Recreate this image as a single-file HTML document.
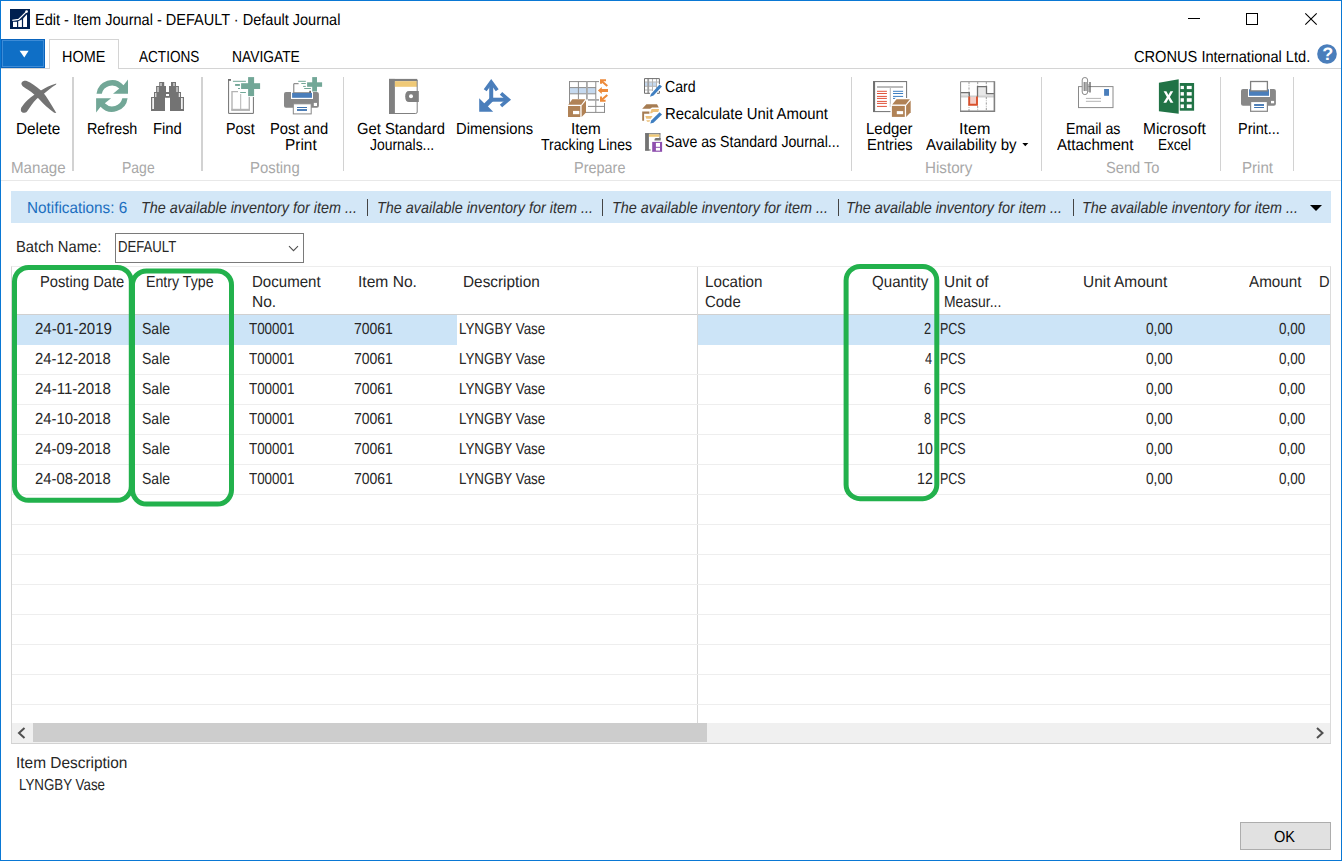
<!DOCTYPE html>
<html lang="en"><head><meta charset="utf-8"><title>Edit - Item Journal - DEFAULT · Default Journal</title>
<style>
html,body{margin:0;padding:0;background:#fff;}
body{width:1342px;height:861px;overflow:hidden;font-family:"Liberation Sans",sans-serif;}
#win{position:relative;width:1342px;height:861px;background:#fff;overflow:hidden;}
.t{position:absolute;text-rendering:geometricPrecision;transform-origin:0 0;white-space:pre;line-height:1;font-family:"Liberation Sans",sans-serif;}
.a{position:absolute;}
svg{position:absolute;overflow:visible;}

</style></head>
<body>
<div id="win">
<!-- window frame -->
<div class="a" style="left:0;top:0;width:1342px;height:1px;background:#0a78d4"></div>
<div class="a" style="left:0;top:0;width:1px;height:861px;background:#0a78d4"></div>
<div class="a" style="left:1341px;top:0;width:1px;height:861px;background:#0a78d4"></div>
<div class="a" style="left:0;top:860px;width:1342px;height:1px;background:#0a78d4"></div>
<!-- tabs -->
<div class="a" style="left:1px;top:68px;width:1340px;height:1px;background:#d4d4d4"></div>
<div class="a" style="left:1px;top:39px;width:44px;height:29px;background:#0f6fc6;border:1px solid #0a64bd;box-sizing:border-box;box-shadow:inset 0 0 0 1px #3d8bd6"></div>
<div class="a" style="left:49px;top:39px;width:70px;height:30px;border:1px solid #d4d4d4;border-bottom:none;background:#fff;box-sizing:border-box"></div>
<!-- ribbon bottom -->
<div class="a" style="left:1px;top:180px;width:1340px;height:1px;background:#e8e8e8"></div>
<!-- notification bar -->
<div class="a" style="left:11px;top:191px;width:1320px;height:32px;background:#d3e7f7"></div>
<!-- batch input -->
<div class="a" style="left:115px;top:233px;width:189px;height:30px;border:1px solid #7a7a7a;box-sizing:border-box;background:#fff"></div>
<!-- grid -->
<div class="a" style="left:11px;top:266px;width:1320px;height:478px;border:1px solid #dadada;border-top-color:#ededed;border-left-color:#d6d6d6;box-sizing:border-box;background:#fff"></div>
<div class="a" style="left:12px;top:314px;width:1318px;height:1px;background:#d0d0d0"></div>
<div class="a" style="left:12px;top:315px;width:445px;height:30px;background:#cce4f7"></div>
<div class="a" style="left:698px;top:315px;width:632px;height:30px;background:#cce4f7"></div>
<div class="a" style="left:697px;top:267px;width:1px;height:456px;background:#d8d8d8"></div>
<!-- OK -->
<div class="a" style="left:1240px;top:822px;width:91px;height:28px;border:1px solid #adadad;box-sizing:border-box;background:#e1e1e1"></div>
<div class="a" style="left:12px;top:374px;width:1318px;height:1px;background:#eeeeee"></div>
<div class="a" style="left:12px;top:404px;width:1318px;height:1px;background:#eeeeee"></div>
<div class="a" style="left:12px;top:434px;width:1318px;height:1px;background:#eeeeee"></div>
<div class="a" style="left:12px;top:464px;width:1318px;height:1px;background:#eeeeee"></div>
<div class="a" style="left:12px;top:494px;width:1318px;height:1px;background:#eeeeee"></div>
<div class="a" style="left:12px;top:524px;width:1318px;height:1px;background:#eeeeee"></div>
<div class="a" style="left:12px;top:554px;width:1318px;height:1px;background:#eeeeee"></div>
<div class="a" style="left:12px;top:584px;width:1318px;height:1px;background:#eeeeee"></div>
<div class="a" style="left:12px;top:614px;width:1318px;height:1px;background:#eeeeee"></div>
<div class="a" style="left:12px;top:644px;width:1318px;height:1px;background:#eeeeee"></div>
<div class="a" style="left:12px;top:674px;width:1318px;height:1px;background:#eeeeee"></div>
<div class="a" style="left:12px;top:704px;width:1318px;height:1px;background:#eeeeee"></div>
<!-- scrollbar -->
<div class="a" style="left:12px;top:723px;width:1318px;height:20px;background:#f0f0f0"></div>
<div class="a" style="left:33px;top:723px;width:674px;height:19px;background:#cdcdcd"></div>
<div class="a" style="left:11px;top:743px;width:1320px;height:1px;background:#d2d2d2"></div>
<svg style="left:12px;top:723px" width="21" height="20" viewBox="0 0 21 20"><path d="M12.5 5 L7 10 L12.5 15" fill="none" stroke="#505050" stroke-width="2"/></svg>
<svg style="left:1309px;top:723px" width="21" height="20" viewBox="0 0 21 20"><path d="M8 5 L13.5 10 L8 15" fill="none" stroke="#505050" stroke-width="2"/></svg>
<!-- group separators -->
<div class="a" style="left:72px;top:77px;width:2px;height:94px;background:#d2d2d2"></div>
<div class="a" style="left:201px;top:77px;width:2px;height:94px;background:#d2d2d2"></div>
<div class="a" style="left:343px;top:77px;width:1px;height:94px;background:#d2d2d2"></div>
<div class="a" style="left:851px;top:77px;width:1px;height:94px;background:#d2d2d2"></div>
<div class="a" style="left:1041px;top:77px;width:1px;height:94px;background:#d2d2d2"></div>
<div class="a" style="left:1220px;top:77px;width:1px;height:94px;background:#d2d2d2"></div>
<div class="a" style="left:1293px;top:77px;width:1px;height:94px;background:#d2d2d2"></div>
<div class="a" style="left:367px;top:199px;width:1px;height:17px;background:#444"></div>
<div class="a" style="left:602px;top:199px;width:1px;height:17px;background:#444"></div>
<div class="a" style="left:838px;top:199px;width:1px;height:17px;background:#444"></div>
<div class="a" style="left:1073px;top:199px;width:1px;height:17px;background:#444"></div>
<svg style="left:1309px;top:204px" width="14" height="8" viewBox="0 0 14 8"><path d="M1 1 L13 1 L7 7 Z" fill="#000"/></svg>
<!-- blue button arrow -->
<svg style="left:17px;top:49px" width="14" height="10" viewBox="0 0 14 10"><path d="M2.6 1.8 L11.6 1.8 L7.3 8.5 Z" fill="#fff"/></svg>
<!-- combo chevron -->
<svg style="left:288px;top:245px" width="12" height="8" viewBox="0 0 12 8"><path d="M1 1.2 L5.5 5.7 L10 1.2" fill="none" stroke="#505050" stroke-width="1.1"/></svg>
<!-- availability dropdown arrow -->
<svg style="left:1022px;top:143px" width="7" height="4" viewBox="0 0 7 4"><path d="M0.3 0 L6.3 0 L3.3 3.3 Z" fill="#000"/></svg>
<!-- window controls -->
<svg style="left:1188px;top:18px" width="12" height="1" viewBox="0 0 12 1"><rect width="12" height="1" fill="#000"/></svg>
<svg style="left:1246px;top:13px" width="12" height="12" viewBox="0 0 12 12"><rect x="0.5" y="0.5" width="11" height="11" fill="none" stroke="#000" stroke-width="1"/></svg>
<svg style="left:1305px;top:13px" width="12" height="12" viewBox="0 0 12 12"><path d="M0.3 0.3 L11.7 11.7 M11.7 0.3 L0.3 11.7" stroke="#000" stroke-width="1.1" fill="none"/></svg>
<!-- green annotation boxes -->
<svg style="left:0;top:0;z-index:5" width="1342" height="861" viewBox="0 0 1342 861">
<rect x="14.5" y="267.5" width="116.8" height="232.8" rx="14" ry="14" fill="none" stroke="#22b14c" stroke-width="5"/>
<rect x="132.5" y="271" width="99" height="233" rx="14" ry="14" fill="none" stroke="#22b14c" stroke-width="5"/>
<rect x="846.1" y="266.5" width="90.7" height="232.2" rx="14" ry="14" fill="none" stroke="#22b14c" stroke-width="5"/>
</svg>

<div class="a dcover" style="left:1330px;top:267px;width:10px;height:47px;background:#fff;z-index:4;border-left:1px solid #dcdcdc;box-sizing:border-box"></div>
<svg style="left:0;top:0" width="1342" height="130" viewBox="0 0 1342 130">
<!-- app icon -->
<g>
<rect x="10" y="9" width="20" height="20" fill="#002050"/>
<path d="M13 21.8 L17 21.8 L17 27 L13 27 Z" fill="#fff"/>
<path d="M18.2 21.2 L21.9 19.6 L21.9 27 L18.2 27 Z" fill="#fff"/>
<path d="M23.1 18.4 L27 14.3 L27 27 L23.1 27 Z" fill="#fff"/>
<path d="M12.3 20.3 L18.6 19.5 L26.5 11.6" fill="none" stroke="#fff" stroke-width="1.3"/>
<circle cx="26.6" cy="11.6" r="1.3" fill="#fff"/>
</g>
<!-- help -->
<circle cx="1327" cy="54" r="9.8" fill="#4a7ebb"/>
<!-- Delete X -->
<g fill="#737373">
<path d="M21.6 84.6 C20.8 82 23.5 80.2 26.8 81 C31 82.5 36 86.5 40.4 89.9 C43.5 92.5 45.8 95.8 47.6 98.8 C50.5 103.5 53.5 108 56.3 112.9 L54.2 112.7 C51.5 110.5 48.5 108.5 45.8 106 C42 102.3 38.5 98 34.2 94.4 C30.5 91.3 26 88.8 23 86.6 C22.3 86 21.9 85.3 21.6 84.6 Z"/>
<path d="M56.3 83.4 L56.1 84.6 C53.5 86 51 87.8 48.5 89.9 C46.5 91.4 44.8 92.9 43.1 94.4 C41 95.8 38.8 97.2 36.8 98.8 C34.8 100.8 33 103 31.5 105.1 C30 107.2 28.5 109.4 27 111.4 C25.8 112.8 23.8 113.2 22.4 112.6 C20.6 111.8 20.6 109.6 21.2 107.8 C23 104.8 25.5 102 27.9 99.7 C31.8 96.3 36 93.5 40.4 90.8 C42.8 89.3 45.2 88 47.6 86.8 C50.4 85.5 53.3 84.3 56.3 83.4 Z"/>
</g>
<!-- Refresh -->
<g fill="#72a797">
<path d="M96.5 93.7 A15.6 15.6 0 0 1 123.5 85.2 L128 79.4 L128 93.7 L113 93.7 L119.3 88.6 A10.4 10.4 0 0 0 101.8 93.7 Z"/>
<path d="M127.6 98.2 A15.6 15.6 0 0 1 100.6 106.7 L96.1 112.5 L96.1 98.2 L111.1 98.2 L104.8 103.3 A10.4 10.4 0 0 0 122.3 98.2 Z"/>
</g>
<!-- Find (binoculars) -->
<g fill="#737373">
<rect x="159.2" y="82" width="5" height="4.5"/>
<rect x="156.1" y="86" width="9.9" height="6.5"/>
<rect x="154" y="92" width="12" height="5.5"/>
<rect x="151" y="97" width="14" height="14"/>
<rect x="171" y="82" width="5" height="4.5"/>
<rect x="169" y="86" width="9.9" height="6.5"/>
<rect x="169" y="92" width="12" height="5.5"/>
<rect x="170" y="97" width="14" height="14"/>
<rect x="165.5" y="92" width="4" height="2"/>
<rect x="165.5" y="96" width="4" height="1.8"/>
</g>
<g fill="#fff">
<rect x="152.3" y="98" width="1.6" height="11"/>
<rect x="155.3" y="93" width="1" height="4"/>
<rect x="157.5" y="87" width="1" height="5"/>
<rect x="160.5" y="83" width="1" height="3"/>
<rect x="181.1" y="98" width="1.6" height="11"/>
<rect x="178.8" y="93" width="1" height="4"/>
<rect x="176.5" y="87" width="1" height="5"/>
<rect x="173.5" y="83" width="1" height="3"/>
</g>
<!-- Post -->
<g>
<path d="M231 79.7 L228.6 79.7 L228.6 113.4 L253.4 113.4 L253.4 97" fill="none" stroke="#707070" stroke-width="1"/>
<rect x="228" y="79" width="3" height="1.8" fill="#707070"/>
<path d="M238 91.6 L232 91.6 L232 110 L249.3 110 L249.3 97" fill="none" stroke="#b4b4b4" stroke-width="1.4"/>
<rect x="231.4" y="108.8" width="18.5" height="2" fill="#b4b4b4"/>
<rect x="240.2" y="94" width="1" height="15" fill="#b4b4b4"/>
<g fill="#72a797">
<rect x="248.1" y="77.1" width="6" height="19"/>
<rect x="241.1" y="83.2" width="19" height="5.8"/>
<rect x="232.9" y="80.8" width="13" height="1"/>
<rect x="235.1" y="84" width="4.8" height="1.9"/>
<rect x="238" y="88" width="2" height="1"/>
<rect x="240.2" y="92" width="5.7" height="1"/>
</g>
</g>
<!-- Post and Print -->
<g>
<rect x="284" y="92.1" width="34.9" height="15.7" rx="2" fill="#888"/>
<rect x="291" y="91" width="22" height="8" fill="#fff"/>
<rect x="292.1" y="92.8" width="19.9" height="5" fill="#4a7ebb"/>
<rect x="293.3" y="83.2" width="17" height="9.6" fill="#fff"/>
<path d="M298.6 83.7 L293.8 83.7 L293.8 92.8" fill="none" stroke="#777" stroke-width="1"/>
<path d="M293.3 92.6 L311 92.6" stroke="#777" stroke-width="0.8"/>
<rect x="309.3" y="90.8" width="1.7" height="2.2" fill="#666"/>
<rect x="293.3" y="103.8" width="17.9" height="10.1" fill="#fff" stroke="#888" stroke-width="1"/>
<rect x="297" y="107" width="10" height="1" fill="#3c72b0"/>
<rect x="297" y="109.1" width="10" height="1.8" fill="#3c72b0"/>
<rect x="313.8" y="102.9" width="3.2" height="3.1" fill="#fff"/>
<g fill="#72a797">
<rect x="312.2" y="77.1" width="4.8" height="14.4"/>
<rect x="307.1" y="82.3" width="15" height="4.5"/>
<rect x="298.2" y="80.8" width="7.6" height="1"/>
<rect x="301.3" y="83" width="4.5" height="1"/>
<rect x="303.1" y="85.9" width="2.7" height="1"/>
<rect x="304.2" y="88" width="6.7" height="1"/>
</g>
</g>
<!-- Get Standard Journals -->
<g>
<rect x="389" y="78.9" width="28.5" height="35" fill="#fff"/>
<rect x="389" y="78.9" width="5.9" height="35" fill="#808080"/>
<rect x="389" y="78.9" width="28.3" height="2.3" fill="#808080"/>
<rect x="394.9" y="81.2" width="22.1" height="5.6" fill="#efc977"/>
<path d="M417.2 80 L417.2 112 Q417.2 113.5 415.7 113.5 L389 113.5" fill="none" stroke="#808080" stroke-width="1"/>
<path d="M418.8 91 L409 91 Q405.2 91 405.2 96.5 Q405.2 102 409 102 L418.8 102 Z" fill="#808080"/>
<circle cx="411" cy="96.3" r="2" fill="#fff"/>
</g>
<!-- Dimensions -->
<g fill="none" stroke="#4a7ebb" stroke-width="4">
<path d="M491.2 100 L491.2 83"/>
<path d="M490 99.7 L507 99.7"/>
<path d="M491.8 99.2 L483 108" stroke-width="4.6"/>
</g>
<g fill="none" stroke="#4a7ebb" stroke-width="3.6">
<path d="M485.2 90.2 L491.2 82 L497.2 90.2"/>
<path d="M501 93.4 L508.3 99.7 L501 106"/>
</g>
<path d="M479.2 111.7 L479.2 98.3 L484 103 L488.5 107 L493.2 111.7 Z" fill="#4a7ebb"/>
<!-- Item Tracking Lines -->
<g>
<rect x="569.5" y="88" width="26.5" height="5.5" fill="#c5d9ef"/>
<g stroke="#8c8c8c" stroke-width="1" fill="none">
<path d="M569 81.6 L599 81.6"/>
<path d="M569.5 81.2 L569.5 104"/>
<path d="M569 87.6 L596 87.6"/>
<path d="M569 93.8 L596 93.8"/>
<path d="M578.4 81.5 L578.4 99"/>
<path d="M595.8 81.5 L595.8 112.5"/>
<path d="M588 106.4 L604.5 106.4"/>
<path d="M586 112.4 L605 112.4"/>
<path d="M604.5 103 L604.5 112.8"/>
</g>
<rect x="586" y="81.5" width="1.8" height="18" fill="#a8a8a8"/>
<rect x="588" y="99" width="11" height="1.8" fill="#a8a8a8"/>
<g fill="#ed8b3b">
<path d="M597.9 90.4 L601.8 87 L601.8 89 L608 89 L608 91.9 L601.8 91.9 L601.8 93.9 Z"/>
<path d="M600 79.2 L606 79.2 L606 81.2 L603.3 81.2 L608 85.2 L606.6 86.8 L602 82.8 L602 83.8 L600 83.8 Z"/>
<path d="M600 101.7 L605.6 101.7 L605.6 99.7 L603.3 99.7 L608 95.8 L606.6 94.2 L602 98.2 L602 96.6 L600 96.6 Z"/>
</g>
<g fill="#b08256">
<rect x="568" y="106" width="12.3" height="11"/>
<path d="M568.3 104.7 L572.3 99.3 L585.3 99.3 L581.2 104.7 Z"/>
<path d="M581.6 105.8 L586 100.4 L586 112.6 L581.6 117 Z"/>
</g>
<rect x="573" y="110.9" width="6.3" height="3.3" fill="#fff"/>
</g>
<!-- Card small icon -->
<g>
<rect x="644.5" y="82.3" width="11.5" height="3.8" fill="#c5d9ef"/>
<g stroke="#b4b4b4" stroke-width="1">
<path d="M652.5 78.5 L652.5 91"/>
<path d="M656.5 78.5 L656.5 88"/>
<path d="M644.5 82 L659.5 82"/>
<path d="M644.5 86.3 L656 86.3"/>
<path d="M644.5 90 L652 90"/>
</g>
<rect x="647.3" y="78.5" width="1.8" height="15" fill="#a0a0a0"/>
<path d="M659.4 84 L659.4 78.6 L644.5 78.6 L644.5 93.3 L650 93.3" fill="none" stroke="#6e6e6e" stroke-width="1"/>
<path d="M657 93.3 L659.4 93.3 L659.4 91" fill="none" stroke="#6e6e6e" stroke-width="1"/>
<path d="M650 96.8 L651 94 L659.5 84.5 L662 86.5 L653.5 95.5 Z" fill="#3f7fc1"/>
</g>
<!-- Recalculate small icon -->
<g>
<path d="M642.2 108.7 L646.4 104.2 L657 104.2 L658.8 107.5 L652 107.5 L650.2 108.7 Z" fill="#a67c52"/>
<path d="M642.2 111.5 L649.4 111.5 L649.4 113.8 L644.1 113.8 L644.1 120.8 L642.2 120.8 Z" fill="#a67c52"/>
<path d="M651.6 109 L659.1 109 L658.3 112 L653.4 112 L651.6 113.2 L650 113.2 Z" fill="#ecc07a"/>
<path d="M645.3 116 L652.5 116 L650.8 118.7 L646.3 118.7 Z" fill="#ecc07a"/>
<path d="M646.2 120.2 L650.2 120.2 L649.4 121.8 L647.2 121.8 Z" fill="#ecc07a"/>
<path d="M650.3 123.6 L651.2 120.6 L659.6 112.2 L662 114.4 L653.5 122.7 Z" fill="#3f7fc1"/>
</g>
<!-- Save small icon -->
<g>
<rect x="645.1" y="133.2" width="3.8" height="17.4" fill="#737373"/>
<rect x="645.1" y="133.2" width="15.2" height="1.2" fill="#737373"/>
<rect x="659.4" y="133.2" width="1" height="6" fill="#737373"/>
<rect x="645.1" y="149.4" width="5.5" height="1.2" fill="#737373"/>
<rect x="649" y="134.4" width="10.4" height="2.4" fill="#efc977"/>
<path d="M654.5 140.6 L654.5 139.6 Q654.5 138.1 656 138.1 L660.7 138.1 L660.7 140.6 Z" fill="#737373"/>
<rect x="652.2" y="141.9" width="9.9" height="9.9" fill="#8e4fae"/>
<rect x="655.9" y="142.9" width="4.1" height="3.9" fill="#fff"/>
<rect x="655.9" y="147.8" width="4.1" height="2.8" fill="#fff"/>
</g>
<!-- Ledger Entries -->
<g>
<rect x="873.6" y="81.6" width="33" height="30" fill="#fff" stroke="#707070" stroke-width="1"/>
<rect x="873.1" y="81.2" width="2" height="30.8" fill="#707070"/>
<rect x="877" y="86.1" width="26.1" height="1.8" fill="#b4b4b4"/>
<rect x="889.8" y="88" width="1" height="19" fill="#b4b4b4"/>
<g fill="#e0533a">
<rect x="877" y="90.8" width="9.9" height="1"/><rect x="877" y="93" width="9.9" height="1"/>
<rect x="877" y="95.9" width="9.9" height="1"/><rect x="877" y="97.9" width="9.9" height="1"/>
<rect x="877" y="100.9" width="9.9" height="1"/><rect x="877" y="102.9" width="9.9" height="1"/>
<rect x="877" y="105.9" width="9.9" height="1"/>
</g>
<g fill="#3f7fc1">
<rect x="893" y="90.8" width="10.1" height="1"/><rect x="893" y="93" width="10.1" height="1"/>
<rect x="893" y="95.9" width="10.1" height="1"/><rect x="893" y="97.9" width="3" height="1"/>
</g>
<path d="M890.5 118 L890.5 104 L895.5 98 L911.8 98 L911.8 113 L906.5 118 Z" fill="#fff"/>
<g fill="#b08256">
<rect x="891.9" y="105.9" width="12.9" height="11"/>
<path d="M892.2 104.6 L896.5 99.3 L909.9 99.3 L905.7 104.6 Z"/>
<path d="M906.1 105.6 L910.7 100.5 L910.7 112.2 L906.1 117 Z"/>
</g>
<rect x="896.8" y="111.1" width="6.3" height="3.1" fill="#fff"/>
</g>
<!-- Item Availability -->
<g>
<rect x="960.5" y="81.6" width="34" height="30" fill="#fff"/>
<rect x="961" y="92.7" width="8" height="3.8" fill="#e8e8e8"/>
<rect x="978" y="86.6" width="8.5" height="9.9" fill="#e8e8e8"/>
<rect x="986.5" y="93.7" width="8" height="2.8" fill="#e8e8e8"/>
<rect x="961" y="95.5" width="33.5" height="2" fill="#d0d0d0"/>
<rect x="969.3" y="97" width="7.6" height="7.6" fill="#f4cfc8"/>
<g stroke="#9a9a9a" stroke-width="1" stroke-dasharray="2.2 1.2 0.8 1.2">
<path d="M969 82 L969 111.5"/><path d="M977.7 82 L977.7 86"/><path d="M977.7 106 L977.7 111.5"/><path d="M986.3 97 L986.3 111.5"/><path d="M986.3 82 L986.3 86"/>
</g>
<path d="M960.5 92.7 L969.3 92.7 L969.3 96.5" fill="none" stroke="#707070" stroke-width="1.3"/>
<path d="M977.5 97 L977.5 86.6 L986.5 86.6 L986.5 93.7 L994.5 93.7" fill="none" stroke="#707070" stroke-width="1.3"/>
<path d="M969.2 96.5 L969.2 104.7 L977 104.7 L977 96.5" fill="none" stroke="#d9512c" stroke-width="1.9"/>
<path d="M960.6 111.8 L960.6 81.7 L994.4 81.7" fill="none" stroke="#8a8a8a" stroke-width="1"/>
<path d="M960.1 111.3 L994.4 111.3 L994.4 81.2" fill="none" stroke="#808080" stroke-width="1.6"/>
</g>
<!-- Email as Attachment -->
<g>
<rect x="1078.5" y="86.6" width="34.5" height="21" fill="#fff" stroke="#8a8a8a" stroke-width="1"/>
<rect x="1104.1" y="89" width="4.9" height="6.8" fill="#4a7ebb"/>
<rect x="1085.9" y="97.9" width="15.1" height="1" fill="#b4b4b4"/>
<rect x="1085.9" y="100.8" width="15.1" height="1" fill="#b4b4b4"/>
<path d="M1082.2 92 L1082.2 80 Q1082.2 77.5 1084.9 77.5 Q1087.6 77.5 1087.6 80 L1087.6 92 Q1087.6 94.6 1084.9 94.6 Q1082.2 94.6 1082.2 92 Z" fill="#fff" stroke="#8a8a8a" stroke-width="1"/>
<path d="M1084.2 82 L1084.2 91 M1086 82 L1086 91" stroke="#5c5c5c" stroke-width="1" fill="none"/>
<path d="M1090 82 L1090 92.5" stroke="#5c5c5c" stroke-width="1.3" fill="none"/><path d="M1088.7 84 L1088.7 92" stroke="#9a9a9a" stroke-width="0.8" fill="none"/>
</g>
<!-- Excel -->
<g>
<rect x="1179.8" y="83" width="14.3" height="27.7" fill="#217346"/>
<g fill="#fff">
<rect x="1180.6" y="85.9" width="3.3" height="3.2"/><rect x="1186.8" y="85.9" width="4.9" height="3.2"/>
<rect x="1180.6" y="92.1" width="3.3" height="3.5"/><rect x="1186.8" y="92.1" width="4.9" height="3.5"/>
<rect x="1180.6" y="98.2" width="3.3" height="3.6"/><rect x="1186.8" y="98.2" width="4.9" height="3.6"/>
<rect x="1180.6" y="104.4" width="3.3" height="3.7"/><rect x="1186.8" y="104.4" width="4.9" height="3.7"/>
</g>
<path d="M1158.9 82.7 L1178.7 79.2 L1178.7 113.8 L1158.9 111.2 Z" fill="#217346"/>
<path d="M1163.6 91.2 L1166.4 91.2 L1168.4 95 L1170.4 91.2 L1173.2 91.2 L1169.9 96.9 L1173.4 102.8 L1170.5 102.8 L1168.4 98.9 L1166.3 102.8 L1163.4 102.8 L1166.9 96.9 Z" fill="#fff"/>
</g>
<!-- Print -->
<g>
<rect x="1241" y="89.1" width="34.9" height="16.7" rx="2" fill="#888"/>
<rect x="1248" y="89" width="22" height="8" fill="#fff"/>
<rect x="1249" y="89.3" width="20" height="6.5" fill="#4a7ebb"/>
<rect x="1250.6" y="81.5" width="16.8" height="9.4" fill="#fff" stroke="#808080" stroke-width="1.3"/>
<rect x="1250.6" y="101.5" width="16.8" height="9.8" fill="#fff" stroke="#888" stroke-width="1.2"/>
<rect x="1254.1" y="104.1" width="9.9" height="1.8" fill="#3c72b0"/>
<rect x="1254.1" y="107" width="9.9" height="1" fill="#3c72b0"/>
<rect x="1271" y="100.9" width="3.1" height="2.4" fill="#fff"/>
</g>
</svg>
<span class="t" style="left:1322.2px;top:44.5px;font-size:18px;font-weight:bold;color:#fff;">?</span>


<span class="t" style="left:34.99px;top:13px;font-size:16px;transform:scaleX(0.9078);color:#000;">Edit - Item Journal - DEFAULT · Default Journal</span>
<span class="t" style="left:1133.59px;top:50px;font-size:16px;transform:scaleX(0.9132);color:#000;">CRONUS International Ltd.</span>
<span class="t" style="left:62.37px;top:50px;font-size:16px;transform:scaleX(0.9014);color:#000;">HOME</span>
<span class="t" style="left:138.60px;top:50px;font-size:16px;transform:scaleX(0.8492);color:#000;">ACTIONS</span>
<span class="t" style="left:232.37px;top:50px;font-size:16px;transform:scaleX(0.8638);color:#000;">NAVIGATE</span>
<span class="t" style="left:15.77px;top:122px;font-size:16px;transform:scaleX(0.9571);color:#000;">Delete</span>
<span class="t" style="left:86.74px;top:122px;font-size:16px;transform:scaleX(0.8978);color:#000;">Refresh</span>
<span class="t" style="left:152.94px;top:122px;font-size:16px;transform:scaleX(0.9278);color:#000;">Find</span>
<span class="t" style="left:225.93px;top:122px;font-size:16px;transform:scaleX(0.8957);color:#000;">Post</span>
<span class="t" style="left:270.35px;top:122px;font-size:16px;transform:scaleX(0.9195);color:#000;">Post and</span>
<span class="t" style="left:285.16px;top:138px;font-size:16px;transform:scaleX(0.9624);color:#000;">Print</span>
<span class="t" style="left:356.77px;top:122px;font-size:16px;transform:scaleX(0.9230);color:#000;">Get Standard</span>
<span class="t" style="left:369.60px;top:138px;font-size:16px;transform:scaleX(0.8701);color:#000;">Journals...</span>
<span class="t" style="left:455.97px;top:122px;font-size:16px;transform:scaleX(0.9215);color:#000;">Dimensions</span>
<span class="t" style="left:571.12px;top:122px;font-size:16px;transform:scaleX(0.9550);color:#000;">Item</span>
<span class="t" style="left:540.60px;top:138px;font-size:16px;transform:scaleX(0.8796);color:#000;">Tracking Lines</span>
<span class="t" style="left:664.56px;top:80px;font-size:16px;transform:scaleX(0.8842);color:#000;">Card</span>
<span class="t" style="left:664.60px;top:107px;font-size:16px;transform:scaleX(0.9293);color:#000;">Recalculate Unit Amount</span>
<span class="t" style="left:664.59px;top:135px;font-size:16px;transform:scaleX(0.8844);color:#000;">Save as Standard Journal...</span>
<span class="t" style="left:865.97px;top:122px;font-size:16px;transform:scaleX(0.9355);color:#000;">Ledger</span>
<span class="t" style="left:867.15px;top:138px;font-size:16px;transform:scaleX(0.9173);color:#000;">Entries</span>
<span class="t" style="left:958.73px;top:122px;font-size:16px;transform:scaleX(1.0054);color:#000;">Item</span>
<span class="t" style="left:926.40px;top:138px;font-size:16px;transform:scaleX(0.9375);color:#000;">Availability by</span>
<span class="t" style="left:1065.97px;top:122px;font-size:16px;transform:scaleX(0.8870);color:#000;">Email as</span>
<span class="t" style="left:1056.80px;top:138px;font-size:16px;transform:scaleX(0.9439);color:#000;">Attachment</span>
<span class="t" style="left:1143.19px;top:122px;font-size:16px;transform:scaleX(0.9678);color:#000;">Microsoft</span>
<span class="t" style="left:1158.34px;top:138px;font-size:16px;transform:scaleX(0.8456);color:#000;">Excel</span>
<span class="t" style="left:1238.35px;top:122px;font-size:16px;transform:scaleX(0.9030);color:#000;">Print...</span>
<span class="t" style="left:10.77px;top:161px;font-size:16px;transform:scaleX(0.9453);color:#a8a8a8;">Manage</span>
<span class="t" style="left:122.35px;top:161px;font-size:16px;transform:scaleX(0.8740);color:#a8a8a8;">Page</span>
<span class="t" style="left:250.15px;top:161px;font-size:16px;transform:scaleX(0.9307);color:#a8a8a8;">Posting</span>
<span class="t" style="left:573.56px;top:161px;font-size:16px;transform:scaleX(0.9041);color:#a8a8a8;">Prepare</span>
<span class="t" style="left:924.59px;top:161px;font-size:16px;transform:scaleX(0.9488);color:#a8a8a8;">History</span>
<span class="t" style="left:1106.38px;top:161px;font-size:16px;transform:scaleX(0.9145);color:#a8a8a8;">Send To</span>
<span class="t" style="left:1242.36px;top:161px;font-size:16px;transform:scaleX(0.9436);color:#a8a8a8;">Print</span>
<span class="t" style="left:26.58px;top:201px;font-size:16px;transform:scaleX(0.9551);color:#1c6fc0;">Notifications: 6</span>
<span class="t" style="left:141.19px;top:201px;font-size:16px;transform:scaleX(0.8998);color:#303030;font-style:italic;">The available inventory for item ...</span>
<span class="t" style="left:376.59px;top:201px;font-size:16px;transform:scaleX(0.8998);color:#303030;font-style:italic;">The available inventory for item ...</span>
<span class="t" style="left:611.98px;top:201px;font-size:16px;transform:scaleX(0.8998);color:#303030;font-style:italic;">The available inventory for item ...</span>
<span class="t" style="left:846.38px;top:201px;font-size:16px;transform:scaleX(0.8998);color:#303030;font-style:italic;">The available inventory for item ...</span>
<span class="t" style="left:1081.78px;top:201px;font-size:16px;transform:scaleX(0.8998);color:#303030;font-style:italic;">The available inventory for item ...</span>
<span class="t" style="left:15.57px;top:240px;font-size:16px;transform:scaleX(0.9219);color:#262626;">Batch Name:</span>
<span class="t" style="left:117.58px;top:240px;font-size:16px;transform:scaleX(0.8221);color:#262626;">DEFAULT</span>
<span class="t" style="left:40.38px;top:275px;font-size:16px;transform:scaleX(0.9195);color:#262626;">Posting Date</span>
<span class="t" style="left:145.58px;top:275px;font-size:16px;transform:scaleX(0.8877);color:#262626;">Entry Type</span>
<span class="t" style="left:252.19px;top:275px;font-size:16px;transform:scaleX(0.9409);color:#262626;">Document</span>
<span class="t" style="left:252.08px;top:295px;font-size:16px;transform:scaleX(0.9716);color:#262626;">No.</span>
<span class="t" style="left:357.57px;top:275px;font-size:16px;transform:scaleX(0.9742);color:#262626;">Item No.</span>
<span class="t" style="left:463.36px;top:275px;font-size:16px;transform:scaleX(0.9603);color:#262626;">Description</span>
<span class="t" style="left:704.95px;top:275px;font-size:16px;transform:scaleX(0.9497);color:#262626;">Location</span>
<span class="t" style="left:704.92px;top:295px;font-size:16px;transform:scaleX(0.9334);color:#262626;">Code</span>
<span class="t" style="left:872.36px;top:275px;font-size:16px;transform:scaleX(0.9436);color:#262626;">Quantity</span>
<span class="t" style="left:944.37px;top:275px;font-size:16px;transform:scaleX(0.9653);color:#262626;">Unit of</span>
<span class="t" style="left:944.37px;top:295px;font-size:16px;transform:scaleX(0.8705);color:#262626;">Measur...</span>
<span class="t" style="left:1083.38px;top:275px;font-size:16px;transform:scaleX(0.9663);color:#262626;">Unit Amount</span>
<span class="t" style="left:1248.59px;top:275px;font-size:16px;transform:scaleX(0.9504);color:#262626;">Amount</span>
<span class="t" style="left:1318.60px;top:275px;font-size:16px;transform:scaleX(0.9168);color:#262626;">D</span>
<span class="t" style="left:35.36px;top:322px;font-size:16px;transform:scaleX(0.9390);color:#262626;">24-01-2019</span>
<span class="t" style="left:141.92px;top:322px;font-size:16px;transform:scaleX(0.8773);color:#262626;">Sale</span>
<span class="t" style="left:249.00px;top:322px;font-size:16px;transform:scaleX(0.8367);color:#262626;">T00001</span>
<span class="t" style="left:354.16px;top:322px;font-size:16px;transform:scaleX(0.8732);color:#262626;">70061</span>
<span class="t" style="left:459.37px;top:322px;font-size:16px;transform:scaleX(0.8358);color:#262626;">LYNGBY Vase</span>
<span class="t" style="left:924.40px;top:322px;font-size:16px;transform:scaleX(0.7972);color:#262626;">2</span>
<span class="t" style="left:940.00px;top:322px;font-size:16px;transform:scaleX(0.7800);color:#262626;">PCS</span>
<span class="t" style="left:1145.61px;top:322px;font-size:16px;transform:scaleX(0.8550);color:#262626;">0,00</span>
<span class="t" style="left:1278.60px;top:322px;font-size:16px;transform:scaleX(0.8418);color:#262626;">0,00</span>
<span class="t" style="left:35.38px;top:352px;font-size:16px;transform:scaleX(0.9265);color:#262626;">24-12-2018</span>
<span class="t" style="left:141.92px;top:352px;font-size:16px;transform:scaleX(0.8773);color:#262626;">Sale</span>
<span class="t" style="left:249.00px;top:352px;font-size:16px;transform:scaleX(0.8367);color:#262626;">T00001</span>
<span class="t" style="left:354.16px;top:352px;font-size:16px;transform:scaleX(0.8732);color:#262626;">70061</span>
<span class="t" style="left:459.37px;top:352px;font-size:16px;transform:scaleX(0.8358);color:#262626;">LYNGBY Vase</span>
<span class="t" style="left:925.40px;top:352px;font-size:16px;transform:scaleX(0.7972);color:#262626;">4</span>
<span class="t" style="left:940.00px;top:352px;font-size:16px;transform:scaleX(0.7800);color:#262626;">PCS</span>
<span class="t" style="left:1145.61px;top:352px;font-size:16px;transform:scaleX(0.8550);color:#262626;">0,00</span>
<span class="t" style="left:1278.60px;top:352px;font-size:16px;transform:scaleX(0.8418);color:#262626;">0,00</span>
<span class="t" style="left:35.38px;top:382px;font-size:16px;transform:scaleX(0.9402);color:#262626;">24-11-2018</span>
<span class="t" style="left:141.92px;top:382px;font-size:16px;transform:scaleX(0.8773);color:#262626;">Sale</span>
<span class="t" style="left:249.00px;top:382px;font-size:16px;transform:scaleX(0.8367);color:#262626;">T00001</span>
<span class="t" style="left:354.16px;top:382px;font-size:16px;transform:scaleX(0.8732);color:#262626;">70061</span>
<span class="t" style="left:459.37px;top:382px;font-size:16px;transform:scaleX(0.8358);color:#262626;">LYNGBY Vase</span>
<span class="t" style="left:924.40px;top:382px;font-size:16px;transform:scaleX(0.7972);color:#262626;">6</span>
<span class="t" style="left:940.00px;top:382px;font-size:16px;transform:scaleX(0.7800);color:#262626;">PCS</span>
<span class="t" style="left:1145.61px;top:382px;font-size:16px;transform:scaleX(0.8550);color:#262626;">0,00</span>
<span class="t" style="left:1278.60px;top:382px;font-size:16px;transform:scaleX(0.8418);color:#262626;">0,00</span>
<span class="t" style="left:35.38px;top:412px;font-size:16px;transform:scaleX(0.9265);color:#262626;">24-10-2018</span>
<span class="t" style="left:141.92px;top:412px;font-size:16px;transform:scaleX(0.8773);color:#262626;">Sale</span>
<span class="t" style="left:249.00px;top:412px;font-size:16px;transform:scaleX(0.8367);color:#262626;">T00001</span>
<span class="t" style="left:354.16px;top:412px;font-size:16px;transform:scaleX(0.8732);color:#262626;">70061</span>
<span class="t" style="left:459.37px;top:412px;font-size:16px;transform:scaleX(0.8358);color:#262626;">LYNGBY Vase</span>
<span class="t" style="left:924.40px;top:412px;font-size:16px;transform:scaleX(0.7972);color:#262626;">8</span>
<span class="t" style="left:940.00px;top:412px;font-size:16px;transform:scaleX(0.7800);color:#262626;">PCS</span>
<span class="t" style="left:1145.61px;top:412px;font-size:16px;transform:scaleX(0.8550);color:#262626;">0,00</span>
<span class="t" style="left:1278.60px;top:412px;font-size:16px;transform:scaleX(0.8418);color:#262626;">0,00</span>
<span class="t" style="left:35.38px;top:442px;font-size:16px;transform:scaleX(0.9265);color:#262626;">24-09-2018</span>
<span class="t" style="left:141.92px;top:442px;font-size:16px;transform:scaleX(0.8773);color:#262626;">Sale</span>
<span class="t" style="left:249.00px;top:442px;font-size:16px;transform:scaleX(0.8367);color:#262626;">T00001</span>
<span class="t" style="left:354.16px;top:442px;font-size:16px;transform:scaleX(0.8732);color:#262626;">70061</span>
<span class="t" style="left:459.37px;top:442px;font-size:16px;transform:scaleX(0.8358);color:#262626;">LYNGBY Vase</span>
<span class="t" style="left:917.15px;top:442px;font-size:16px;transform:scaleX(0.8850);color:#262626;">10</span>
<span class="t" style="left:940.00px;top:442px;font-size:16px;transform:scaleX(0.7800);color:#262626;">PCS</span>
<span class="t" style="left:1145.61px;top:442px;font-size:16px;transform:scaleX(0.8550);color:#262626;">0,00</span>
<span class="t" style="left:1278.60px;top:442px;font-size:16px;transform:scaleX(0.8418);color:#262626;">0,00</span>
<span class="t" style="left:35.38px;top:472px;font-size:16px;transform:scaleX(0.9265);color:#262626;">24-08-2018</span>
<span class="t" style="left:141.92px;top:472px;font-size:16px;transform:scaleX(0.8773);color:#262626;">Sale</span>
<span class="t" style="left:249.00px;top:472px;font-size:16px;transform:scaleX(0.8367);color:#262626;">T00001</span>
<span class="t" style="left:354.16px;top:472px;font-size:16px;transform:scaleX(0.8732);color:#262626;">70061</span>
<span class="t" style="left:459.37px;top:472px;font-size:16px;transform:scaleX(0.8358);color:#262626;">LYNGBY Vase</span>
<span class="t" style="left:917.13px;top:472px;font-size:16px;transform:scaleX(0.8850);color:#262626;">12</span>
<span class="t" style="left:940.00px;top:472px;font-size:16px;transform:scaleX(0.7800);color:#262626;">PCS</span>
<span class="t" style="left:1145.61px;top:472px;font-size:16px;transform:scaleX(0.8550);color:#262626;">0,00</span>
<span class="t" style="left:1278.60px;top:472px;font-size:16px;transform:scaleX(0.8418);color:#262626;">0,00</span>
<span class="t" style="left:15.58px;top:756px;font-size:16px;transform:scaleX(0.9641);color:#262626;">Item Description</span>
<span class="t" style="left:19.18px;top:778px;font-size:16px;transform:scaleX(0.8338);color:#262626;">LYNGBY Vase</span>
<span class="t" style="left:1273.76px;top:830px;font-size:16px;transform:scaleX(0.9104);color:#000;">OK</span>
</div>
</body></html>
